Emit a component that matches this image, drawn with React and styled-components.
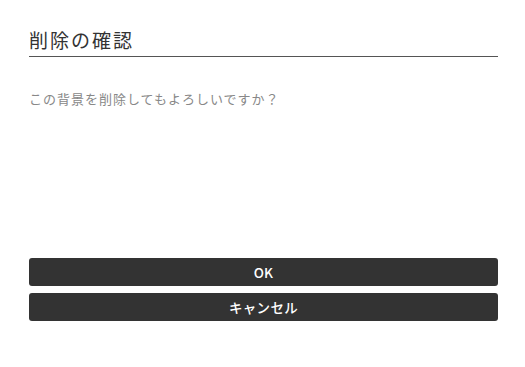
import React from "react";
import styled, { createGlobalStyle } from "styled-components";

const Global = createGlobalStyle`
  html, body { margin: 0; padding: 0; background: #fff; }
  body { font-family: "Noto Sans CJK JP", "Noto Sans", sans-serif; }
`;

const Dialog = styled.div`
  width: 469px;
  padding: 25px 27px 0 29px;
  display: flex;
  flex-direction: column;
`;

const Title = styled.h2`
  margin: 0;
  font-size: 19px;
  font-weight: 400;
  letter-spacing: 2px;
  line-height: 30px;
  color: #333;
  border-bottom: 1px solid #555;
  padding-bottom: 1px;
`;

const Message = styled.p`
  margin: 32px 0 0;
  font-size: 13px;
  letter-spacing: 1px;
  line-height: 20px;
  color: #888;
`;

const Actions = styled.div`
  margin-top: 149px;
  display: flex;
  flex-direction: column;
  gap: 7px;
`;

const Button = styled.button`
  height: 28px;
  border: none;
  border-radius: 3px;
  background: #333;
  color: #fff;
  font-family: "Noto Sans CJK JP", "Noto Sans", sans-serif;
  font-weight: 500;
  font-size: 13.5px;
  letter-spacing: 0.3px;
  padding: 0;
  cursor: pointer;
`;

export default function App() {
  return (
    <>
      <Global />
      <Dialog>
        <Title>削除の確認</Title>
        <Message>この背景を削除してもよろしいですか？</Message>
        <Actions>
          <Button>OK</Button>
          <Button>キャンセル</Button>
        </Actions>
      </Dialog>
    </>
  );
}
